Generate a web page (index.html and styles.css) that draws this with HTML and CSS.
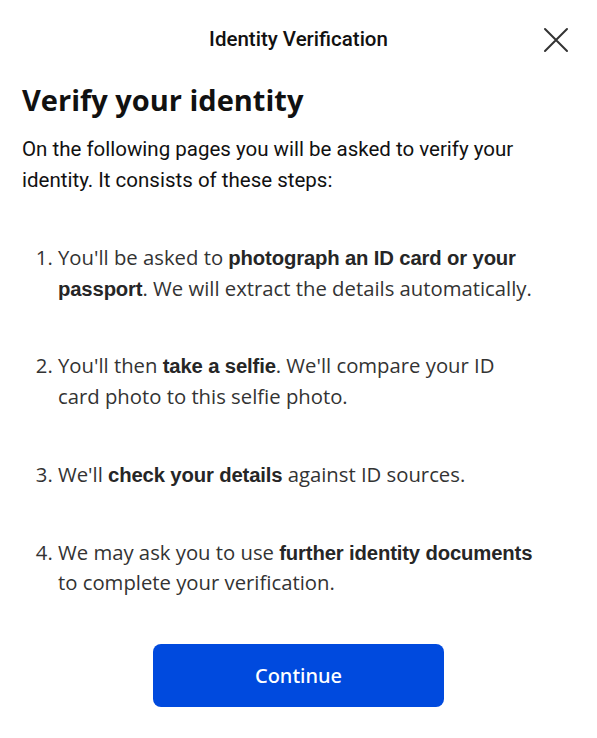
FILE: index.html
```html
<!DOCTYPE html>
<html>
<head>
<meta charset="utf-8">
<link rel="stylesheet" href="styles.css">
</head>
<body>
<div class="page">
  <header class="topbar">
    <div class="topbar-title">Identity Verification</div>
    <button class="close" aria-label="Close">
      <svg width="26" height="26" viewBox="0 0 26 26"><path d="M2 2 L24 24 M24 2 L2 24" stroke="#333" stroke-width="2" stroke-linecap="round" fill="none"/></svg>
    </button>
  </header>
  <main class="content">
    <h1 class="title">Verify your identity</h1>
    <p class="intro">On the following pages you will be asked to verify your identity. It consists of these steps:</p>
    <ol class="steps">
      <li>You'll be asked to <b>photograph an ID card or your passport</b>. We will extract the details automatically.</li>
      <li>You'll then <b>take a selfie</b>. We'll compare your ID card photo to this selfie photo.</li>
      <li>We'll <b>check your details</b> against ID sources.</li>
      <li>We may ask you to use <b>further identity documents</b> to complete your verification.</li>
    </ol>
    <div class="actions">
      <button class="continue">Continue</button>
    </div>
  </main>
</div>
</body>
</html>
```
FILE: styles.css
```css
html, body {
  margin: 0;
  padding: 0;
  background: #fff;
}
.page {
  width: 597px;
  height: 738px;
  overflow: hidden;
}
.topbar {
  position: relative;
  height: 80px;
  display: flex;
  align-items: center;
  justify-content: center;
}
.topbar-title {
  font-family: Roboto, "Liberation Sans", sans-serif;
  font-weight: 500;
  font-size: 20.5px;
  color: #111;
  margin-top: -2px;
}
.close {
  position: absolute;
  right: 28px;
  top: 27px;
  width: 26px;
  height: 26px;
  padding: 0;
  border: 0;
  background: none;
  display: flex;
}
.content {
  padding: 0 22px;
}
.title {
  margin: 0;
  font-family: "Open Sans", "Noto Sans", sans-serif;
  font-weight: 700;
  font-size: 29px;
  line-height: 40px;
  color: #111;
}
.intro {
  margin: 14px 0 0;
  font-family: Roboto, "Liberation Sans", sans-serif;
  font-size: 20.5px;
  line-height: 31px;
  color: #111;
}
.steps {
  margin: 46px 0 0;
  padding: 0 36px 0 36px;
  font-family: "Open Sans", "Noto Sans", sans-serif;
  font-size: 20.3px;
  line-height: 30.7px;
  color: #333;
}
.steps li {
  margin: 0 0 47px;
  padding-left: 0;
}
.steps li:last-child {
  margin-bottom: 0;
}
.steps b {
  font-family: "Liberation Sans", Arial, sans-serif;
  font-weight: 700;
  color: #262626;
  letter-spacing: -0.15px;
  line-height: 16px;
}
.actions {
  display: flex;
  justify-content: center;
  margin-top: 46px;
}
.continue {
  width: 291px;
  height: 63px;
  border: 0;
  border-radius: 8px;
  background: #004ade;
  color: #fff;
  font-family: "Noto Sans", "Open Sans", sans-serif;
  font-weight: 500;
  font-size: 20px;
}
```
